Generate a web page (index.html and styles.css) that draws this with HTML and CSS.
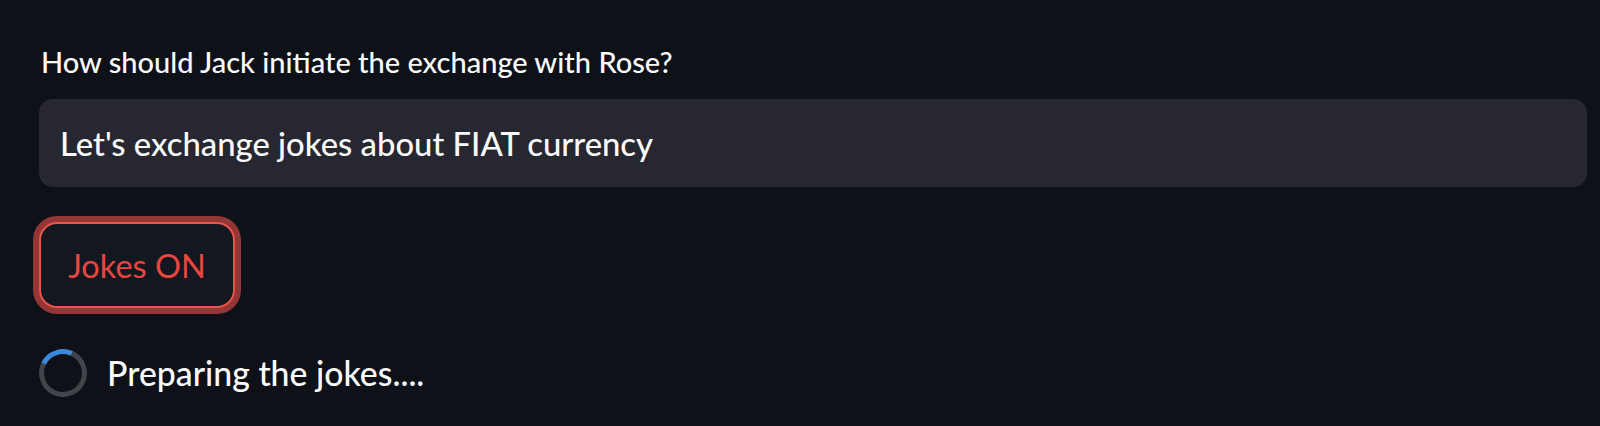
FILE: index.html
```html
<!DOCTYPE html>
<html lang="en">
<head>
<meta charset="utf-8">
<title>Jokes</title>
<link rel="stylesheet" href="styles.css">
</head>
<body>
<main class="app">
  <label class="label" for="prompt">How should Jack initiate the exchange with Rose?</label>
  <div class="input" id="prompt">Let's exchange jokes about FIAT currency</div>
  <div class="btn-row"><button class="btn" type="button">Jokes ON</button></div>
  <div class="status">
    <span class="spinner"></span>
    <span class="status-text">Preparing the jokes....</span>
  </div>
</main>
</body>
</html>
```
FILE: styles.css
```css
html, body {
  margin: 0;
  padding: 0;
  background: #0e1117;
  height: 100%;
}
body {
  font-family: "Lato", "Noto Sans", sans-serif;
  color: #fafafa;
}
.app {
  display: flex;
  flex-direction: column;
  padding: 42px 13px 0 39px;
}
.label {
  display: block;
  font-size: 29px;
  font-weight: 500;
  line-height: 40px;
  margin-left: 2px;
  margin-bottom: 17px;
}
.input {
  height: 88px;
  box-sizing: border-box;
  background: #262730;
  border-radius: 14px;
  padding-left: 21px;
  display: flex;
  align-items: center;
  font-size: 32.8px;
  font-weight: 500;
  color: #fafafa;
}
.btn-row {
  display: flex;
  margin-top: 35px;
}
.btn {
  width: 196px;
  height: 86px;
  box-sizing: border-box;
  background: #131720;
  border: 2px solid #e5554a;
  border-radius: 18px;
  box-shadow: 0 0 0 6px rgba(240, 80, 75, 0.6);
  color: #e8473f;
  font-family: inherit;
  font-size: 32.5px;
  padding: 0;
  cursor: pointer;
}
.status {
  display: flex;
  align-items: center;
  margin-top: 41px;
  gap: 20px;
}
.spinner {
  width: 48px;
  height: 48px;
  box-sizing: border-box;
  border-radius: 50%;
  border: 5px solid #42444a;
  border-top-color: #3a88dc;
  transform: rotate(-20deg);
  flex: none;
}
.status-text {
  font-size: 33.8px;
  font-weight: 500;
  color: #fafafa;
}
```
